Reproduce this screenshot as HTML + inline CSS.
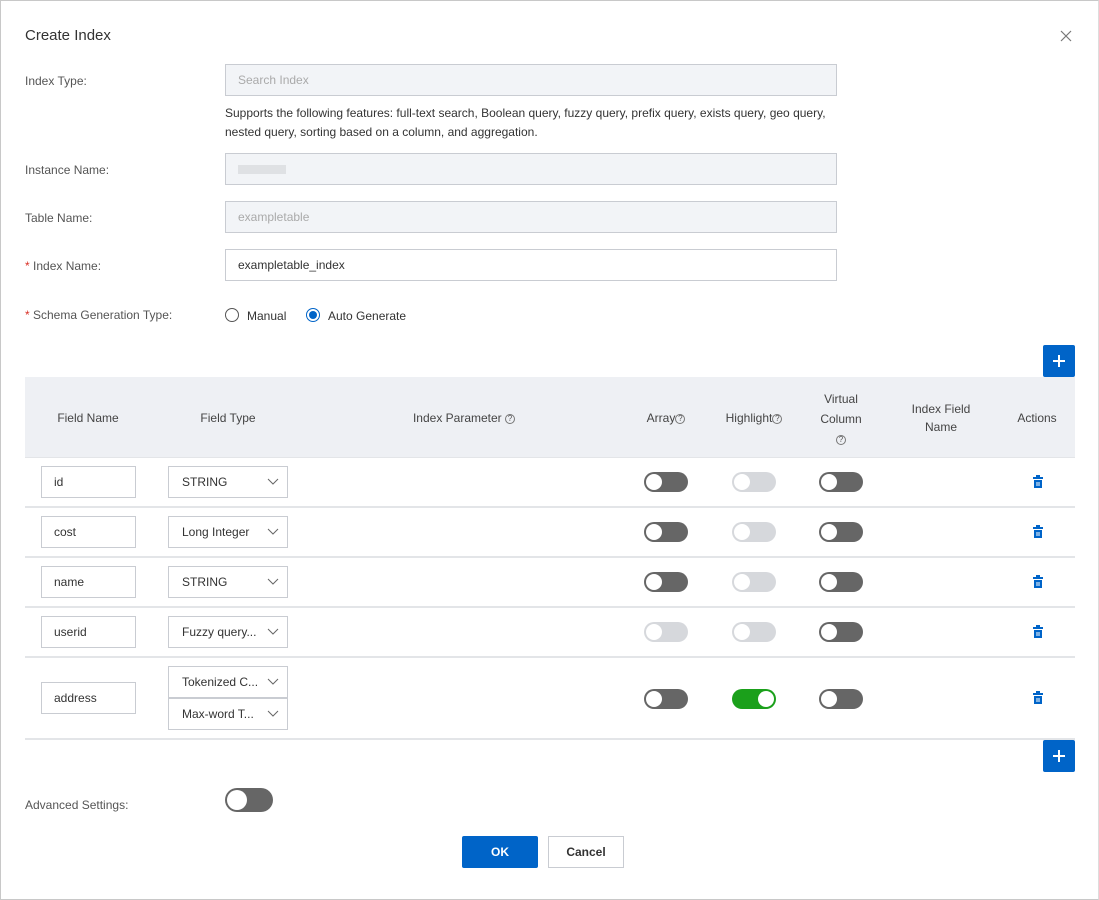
<!DOCTYPE html>
<html><head><meta charset="utf-8"><style>
*{box-sizing:border-box;margin:0;padding:0}
body{width:1099px;height:900px;background:#fff;font-family:"Liberation Sans",sans-serif;font-size:12px;color:#333;position:relative;overflow:hidden}
.a{position:absolute}
.frame{left:0;top:0;width:1099px;height:900px;border:1px solid #c8c8c8;border-right:1px solid #ddd}
.lbl{left:25px;color:#555;font-size:12px}
.req{color:#d93026}
.inp{left:225px;width:612px;height:32px;border:1px solid #c9ccd2;padding-left:12px;line-height:30px;font-size:12px}
.dis{background:#f2f4f7;color:#aaa}
.tog{width:44px;height:20px;border-radius:10px;background:#666}
.tog::after{content:"";position:absolute;left:2px;top:2px;width:16px;height:16px;border-radius:50%;background:#fff}
.tog.off{background:#d6d8dc}
.tog.on{background:#1ba01b}
.tog.on::after{left:26px}
.tog.big::after{width:20px;height:20px}
.fi{left:41px;width:95px;height:32px;border:1px solid #c9ccd2;padding-left:12px;line-height:30px;font-size:12px;color:#333}
.sel{left:168px;width:120px;height:32px;border:1px solid #c9ccd2;padding-left:13px;line-height:30px;font-size:12px;color:#333}
.sel svg{position:absolute;right:8px;top:11px}
.sep{left:25px;width:1050px;height:2px;background:#e3e5e8}
.th{font-size:12px;color:#444;text-align:center;line-height:18px}
.q{display:inline-block;width:10px;height:10px;border:1px solid #777;border-radius:50%;font-size:8px;line-height:8px;text-align:center;vertical-align:1px;color:#555}
.plus{left:1043px;width:32px;height:32px;background:#0064c8;border-radius:2px}
.plus svg{position:absolute;left:10px;top:10px}
.trash{left:1033px}
</style></head><body>
<div class="a frame"></div>
<div class="a" style="left:25px;top:27px;font-size:15px;color:#333">Create Index</div>
<svg class="a" style="left:1060px;top:30px" width="12" height="12" viewBox="0 0 12 12"><path d="M1 1L11 11M11 1L1 11" stroke="#777" stroke-width="1.2"/></svg>

<div class="a lbl" style="top:74px">Index Type:</div>
<div class="a inp dis" style="top:64px">Search Index</div>
<div class="a" style="left:225px;top:104px;line-height:19px;color:#333;width:620px">Supports the following features: full-text search, Boolean query, fuzzy query, prefix query, exists query, geo query, nested query, sorting based on a column, and aggregation.</div>

<div class="a lbl" style="top:163px">Instance Name:</div>
<div class="a inp dis" style="top:153px"><span style="display:inline-block;width:48px;height:9px;background:#dfe1e4;vertical-align:middle"></span></div>
<div class="a lbl" style="top:211px">Table Name:</div>
<div class="a inp dis" style="top:201px">exampletable</div>
<div class="a lbl" style="top:259px"><span class="req">*</span> Index Name:</div>
<div class="a inp" style="top:249px;color:#333">exampletable_index</div>
<div class="a lbl" style="top:308px"><span class="req">*</span> Schema Generation Type:</div>
<div class="a" style="left:225px;top:308px;width:14px;height:14px;border:1px solid #555;border-radius:50%"></div>
<div class="a" style="left:247px;top:309px">Manual</div>
<div class="a" style="left:306px;top:308px;width:14px;height:14px;border:1px solid #0064c8;border-radius:50%"><div style="margin:2px;width:8px;height:8px;border-radius:50%;background:#0064c8"></div></div>
<div class="a" style="left:328px;top:309px">Auto Generate</div>

<div class="a plus" style="top:345px"><svg width="12" height="12"><path d="M6 0V12M0 6H12" stroke="#fff" stroke-width="2"/></svg></div>
<div class="a" style="left:25px;top:377px;width:1050px;height:81px;background:#eef0f4"></div>
<div class="a th" style="left:38px;width:100px;top:409px">Field Name</div>
<div class="a th" style="left:178px;width:100px;top:409px">Field Type</div>
<div class="a th" style="left:384px;width:160px;top:409px">Index Parameter <span class="q">?</span></div>
<div class="a th" style="left:626px;width:80px;top:409px">Array<span class="q">?</span></div>
<div class="a th" style="left:714px;width:80px;top:409px">Highlight<span class="q">?</span></div>
<div class="a th" style="left:801px;width:80px;top:389px;line-height:20px">Virtual<br>Column<br><span class="q">?</span></div>
<div class="a th" style="left:891px;width:100px;top:400px">Index Field<br>Name</div>
<div class="a th" style="left:997px;width:80px;top:409px">Actions</div>
<div class="a sep" style="top:457px;height:1px"></div>

<div class="a fi" style="top:466px">id</div>
<div class="a sel" style="top:466px">STRING<svg width="12" height="8"><path d="M1 1L6 6L11 1" fill="none" stroke="#666"/></svg></div>
<div class="a tog" style="left:644px;top:472px"></div><div class="a tog off" style="left:732px;top:472px"></div><div class="a tog" style="left:819px;top:472px"></div>
<div class="a sep" style="top:506px"></div>

<div class="a fi" style="top:516px">cost</div>
<div class="a sel" style="top:516px">Long Integer<svg width="12" height="8"><path d="M1 1L6 6L11 1" fill="none" stroke="#666"/></svg></div>
<div class="a tog" style="left:644px;top:522px"></div><div class="a tog off" style="left:732px;top:522px"></div><div class="a tog" style="left:819px;top:522px"></div>
<div class="a sep" style="top:556px"></div>

<div class="a fi" style="top:566px">name</div>
<div class="a sel" style="top:566px">STRING<svg width="12" height="8"><path d="M1 1L6 6L11 1" fill="none" stroke="#666"/></svg></div>
<div class="a tog" style="left:644px;top:572px"></div><div class="a tog off" style="left:732px;top:572px"></div><div class="a tog" style="left:819px;top:572px"></div>
<div class="a sep" style="top:606px"></div>

<div class="a fi" style="top:616px">userid</div>
<div class="a sel" style="top:616px">Fuzzy query...<svg width="12" height="8"><path d="M1 1L6 6L11 1" fill="none" stroke="#666"/></svg></div>
<div class="a tog off" style="left:644px;top:622px"></div><div class="a tog off" style="left:732px;top:622px"></div><div class="a tog" style="left:819px;top:622px"></div>
<div class="a sep" style="top:656px"></div>

<div class="a fi" style="top:682px">address</div>
<div class="a sel" style="top:666px">Tokenized C...<svg width="12" height="8"><path d="M1 1L6 6L11 1" fill="none" stroke="#666"/></svg></div>
<div class="a sel" style="top:698px">Max-word T...<svg width="12" height="8"><path d="M1 1L6 6L11 1" fill="none" stroke="#666"/></svg></div>
<div class="a tog" style="left:644px;top:689px"></div><div class="a tog on" style="left:732px;top:689px"></div><div class="a tog" style="left:819px;top:689px"></div>
<div class="a sep" style="top:738px"></div>

<svg class="a trash" style="top:475px" width="10" height="13" viewBox="0 0 10 13"><rect x="3" y="0" width="4" height="2" fill="#0064c8"/><rect x="0" y="2" width="10" height="2" fill="#0064c8"/><rect x="1" y="5" width="8" height="8" fill="#0064c8"/><path d="M4 7V11M6 7V11" stroke="#fff"/></svg>
<svg class="a trash" style="top:525px" width="10" height="13" viewBox="0 0 10 13"><rect x="3" y="0" width="4" height="2" fill="#0064c8"/><rect x="0" y="2" width="10" height="2" fill="#0064c8"/><rect x="1" y="5" width="8" height="8" fill="#0064c8"/><path d="M4 7V11M6 7V11" stroke="#fff"/></svg>
<svg class="a trash" style="top:575px" width="10" height="13" viewBox="0 0 10 13"><rect x="3" y="0" width="4" height="2" fill="#0064c8"/><rect x="0" y="2" width="10" height="2" fill="#0064c8"/><rect x="1" y="5" width="8" height="8" fill="#0064c8"/><path d="M4 7V11M6 7V11" stroke="#fff"/></svg>
<svg class="a trash" style="top:625px" width="10" height="13" viewBox="0 0 10 13"><rect x="3" y="0" width="4" height="2" fill="#0064c8"/><rect x="0" y="2" width="10" height="2" fill="#0064c8"/><rect x="1" y="5" width="8" height="8" fill="#0064c8"/><path d="M4 7V11M6 7V11" stroke="#fff"/></svg>
<svg class="a trash" style="top:691px" width="10" height="13" viewBox="0 0 10 13"><rect x="3" y="0" width="4" height="2" fill="#0064c8"/><rect x="0" y="2" width="10" height="2" fill="#0064c8"/><rect x="1" y="5" width="8" height="8" fill="#0064c8"/><path d="M4 7V11M6 7V11" stroke="#fff"/></svg>

<div class="a plus" style="top:740px"><svg width="12" height="12"><path d="M6 0V12M0 6H12" stroke="#fff" stroke-width="2"/></svg></div>

<div class="a lbl" style="top:798px">Advanced Settings:</div>
<div class="a tog big" style="left:225px;top:788px;width:48px;height:24px;border-radius:12px"></div>
<div class="a" style="left:462px;top:836px;width:76px;height:32px;background:#0064c8;color:#fff;font-weight:bold;text-align:center;line-height:32px;border-radius:2px">OK</div>
<div class="a" style="left:548px;top:836px;width:76px;height:32px;border:1px solid #c9ccd2;color:#333;font-weight:bold;text-align:center;line-height:30px">Cancel</div>
</body></html>
